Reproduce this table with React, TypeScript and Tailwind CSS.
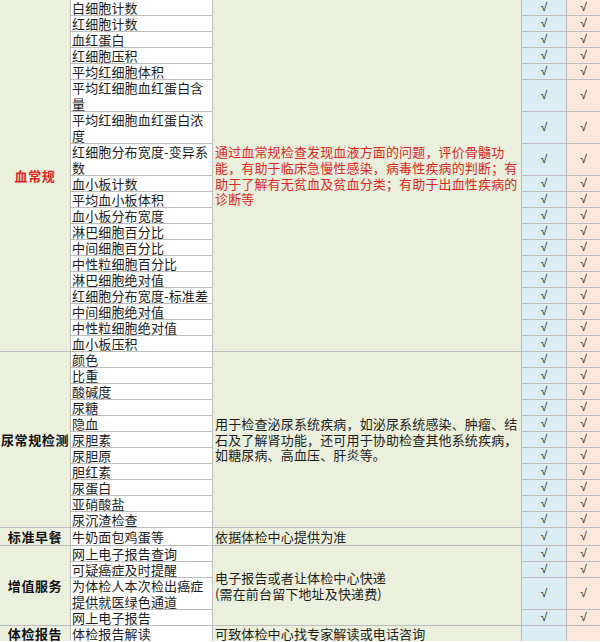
import React from 'react';

type Section = {
  name: string;
  red?: boolean;
  items: string[][];
  desc: string[];
  checks: boolean;
};

const sections: Section[] = [
  {
    name: '血常规',
    red: true,
    checks: true,
    items: [
      ['白细胞计数'],
      ['红细胞计数'],
      ['血红蛋白'],
      ['红细胞压积'],
      ['平均红细胞体积'],
      ['平均红细胞血红蛋白含', '量'],
      ['平均红细胞血红蛋白浓', '度'],
      ['红细胞分布宽度-变异系', '数'],
      ['血小板计数'],
      ['平均血小板体积'],
      ['血小板分布宽度'],
      ['淋巴细胞百分比'],
      ['中间细胞百分比'],
      ['中性粒细胞百分比'],
      ['淋巴细胞绝对值'],
      ['红细胞分布宽度-标准差'],
      ['中间细胞绝对值'],
      ['中性粒细胞绝对值'],
      ['血小板压积'],
    ],
    desc: [
      '通过血常规检查发现血液方面的问题，评价骨髓功',
      '能，有助于临床急慢性感染，病毒性疾病的判断；有',
      '助于了解有无贫血及贫血分类；有助于出血性疾病的',
      '诊断等',
    ],
  },
  {
    name: '尿常规检测',
    checks: true,
    items: [
      ['颜色'],
      ['比重'],
      ['酸碱度'],
      ['尿糖'],
      ['隐血'],
      ['尿胆素'],
      ['尿胆原'],
      ['胆红素'],
      ['尿蛋白'],
      ['亚硝酸盐'],
      ['尿沉渣检查'],
    ],
    desc: [
      '用于检查泌尿系统疾病，如泌尿系统感染、肿瘤、结',
      '石及了解肾功能，还可用于协助检查其他系统疾病，',
      '如糖尿病、高血压、肝炎等。',
    ],
  },
  {
    name: '标准早餐',
    checks: true,
    items: [['牛奶面包鸡蛋等']],
    desc: ['依据体检中心提供为准'],
  },
  {
    name: '增值服务',
    checks: true,
    items: [
      ['网上电子报告查询'],
      ['可疑癌症及时提醒'],
      ['为体检人本次检出癌症', '提供就医绿色通道'],
      ['网上电子报告'],
    ],
    desc: ['电子报告或者让体检中心快递', '(需在前台留下地址及快递费)'],
  },
  {
    name: '体检报告',
    checks: false,
    items: [['体检报告解读']],
    desc: ['可致体检中心找专家解读或电话咨询'],
  },
];

// full class names so tailwind picks them up
const rowSpan: Record<number, string> = {
  1: 'row-span-1',
  2: 'row-span-2',
  5: 'row-span-5',
  11: 'row-span-11',
  22: 'row-span-22',
};

export default function App() {
  return (
    <div className="w-[600px] h-[642px] overflow-hidden bg-white font-['Noto_Sans_CJK_SC','Noto_Sans',sans-serif] text-[13px] leading-[15px] tracking-[0.15px] text-[#1c1c1c]">
      <div className="grid grid-cols-[70px_141px_308px_44px_33px] grid-rows-[repeat(33,15px)_17px_repeat(6,15px)] gap-px bg-[#bdbdbd]">
        {sections.map((sec) => {
          const units = sec.items.reduce((n, it) => n + it.length, 0);
          return sec.items.map((item, i) => {
            const span = rowSpan[item.length];
            return (
              <React.Fragment key={sec.name + i}>
                {i === 0 && (
                  <div
                    className={`${rowSpan[units]} flex items-center justify-center bg-[#ebf0dd] font-bold tracking-[0.6px] whitespace-nowrap ${
                      sec.red ? 'text-[#d9271f]' : 'text-[#111]'
                    }`}
                  >
                    {sec.name}
                  </div>
                )}
                <div className={`${span} flex flex-col justify-center gap-px bg-white pl-px whitespace-nowrap`}>
                  {item.map((line) => (
                    <span key={line}>{line}</span>
                  ))}
                </div>
                {i === 0 && (
                  <div
                    className={`${rowSpan[units]} flex flex-col justify-center bg-[#ebf0dd] pl-[2px] leading-[15.6px] whitespace-nowrap ${
                      sec.red ? 'text-[#d9271f]' : 'text-[#1c1c1c]'
                    }`}
                  >
                    {sec.desc.map((line) => (
                      <span key={line}>{line}</span>
                    ))}
                  </div>
                )}
                <div className={`${span} flex items-center justify-center bg-[#daedf3] font-['Liberation_Sans',sans-serif] text-[12px] text-[#2a2a2a]`}>
                  {sec.checks ? '√' : ''}
                </div>
                <div className={`${span} flex items-center justify-center bg-[#fce8da] font-['Liberation_Sans',sans-serif] text-[12px] text-[#2a2a2a]`}>
                  {sec.checks ? '√' : ''}
                </div>
              </React.Fragment>
            );
          });
        })}
      </div>
    </div>
  );
}
